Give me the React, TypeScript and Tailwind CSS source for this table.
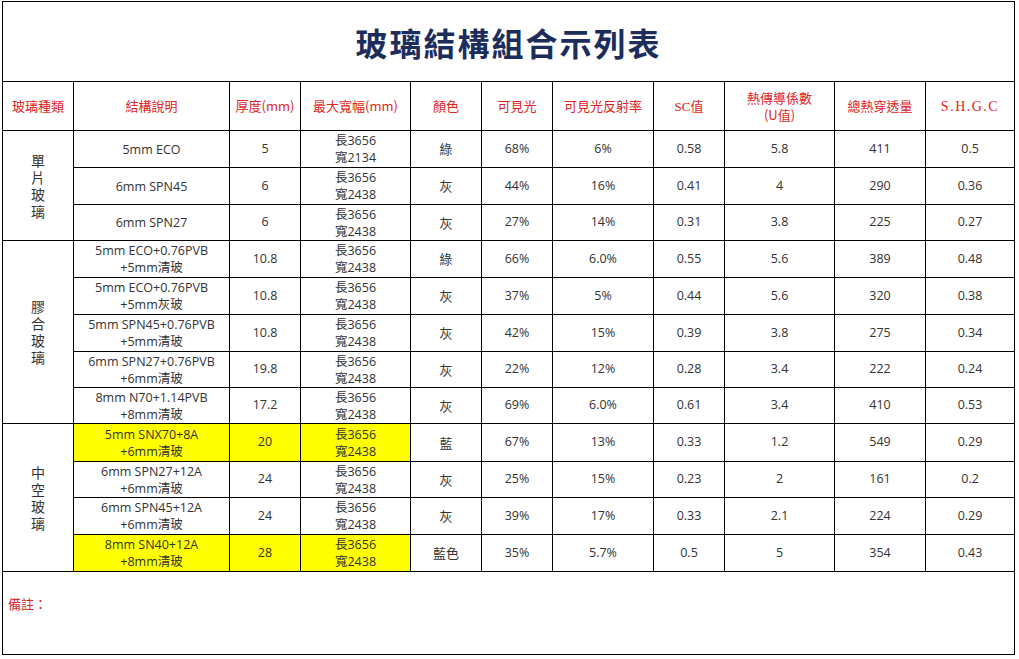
import React from "react";

const rows = [
  { g: "單片玻璃", span: 3, desc: ["5mm ECO"], t: "5", w: "2134", c: "綠", v: "68%", r: "6%", sc: "0.58", u: "5.8", tot: "411", shgc: "0.5", h: "h-[37px]" },
  { desc: ["6mm SPN45"], t: "6", w: "2438", c: "灰", v: "44%", r: "16%", sc: "0.41", u: "4", tot: "290", shgc: "0.36", h: "h-[37px]" },
  { desc: ["6mm SPN27"], t: "6", w: "2438", c: "灰", v: "27%", r: "14%", sc: "0.31", u: "3.8", tot: "225", shgc: "0.27", h: "h-[36px]" },
  { g: "膠合玻璃", span: 5, desc: ["5mm ECO+0.76PVB", "+5mm清玻"], t: "10.8", w: "2438", c: "綠", v: "66%", r: "6.0%", sc: "0.55", u: "5.6", tot: "389", shgc: "0.48", h: "h-[37px]" },
  { desc: ["5mm ECO+0.76PVB", "+5mm灰玻"], t: "10.8", w: "2438", c: "灰", v: "37%", r: "5%", sc: "0.44", u: "5.6", tot: "320", shgc: "0.38", h: "h-[37px]" },
  { desc: ["5mm SPN45+0.76PVB", "+5mm清玻"], t: "10.8", w: "2438", c: "灰", v: "42%", r: "15%", sc: "0.39", u: "3.8", tot: "275", shgc: "0.34", h: "h-[37px]" },
  { desc: ["6mm SPN27+0.76PVB", "+6mm清玻"], t: "19.8", w: "2438", c: "灰", v: "22%", r: "12%", sc: "0.28", u: "3.4", tot: "222", shgc: "0.24", h: "h-[36px]" },
  { desc: ["8mm N70+1.14PVB", "+8mm清玻"], t: "17.2", w: "2438", c: "灰", v: "69%", r: "6.0%", sc: "0.61", u: "3.4", tot: "410", shgc: "0.53", h: "h-[36px]" },
  { g: "中空玻璃", span: 4, hl: true, desc: ["5mm SNX70+8A", "+6mm清玻"], t: "20", w: "2438", c: "藍", v: "67%", r: "13%", sc: "0.33", u: "1.2", tot: "549", shgc: "0.29", h: "h-[38px]" },
  { desc: ["6mm SPN27+12A", "+6mm清玻"], t: "24", w: "2438", c: "灰", v: "25%", r: "15%", sc: "0.23", u: "2", tot: "161", shgc: "0.2", h: "h-[36px]" },
  { desc: ["6mm SPN45+12A", "+6mm清玻"], t: "24", w: "2438", c: "灰", v: "39%", r: "17%", sc: "0.33", u: "2.1", tot: "224", shgc: "0.29", h: "h-[37px]" },
  { hl: true, desc: ["8mm SN40+12A", "+8mm清玻"], t: "28", w: "2438", c: "藍色", v: "35%", r: "5.7%", sc: "0.5", u: "5", tot: "354", shgc: "0.43", h: "h-[37px]" },
];

const cell = "border border-black text-center align-middle p-0";
const hd = "border border-black text-center align-middle p-0 text-[13px] text-[#e02424] font-['Noto_Sans_CJK_TC',sans-serif]";

export default function App() {
  return (
    <div className="min-h-screen bg-white pl-[2px] pt-[1px] font-['Open_Sans','Noto_Sans_CJK_TC',sans-serif] text-[12.5px] text-[#333]">
      <table className="table-fixed border-collapse w-[1013px]">
        <colgroup>
          <col className="w-[71px]" />
          <col className="w-[156px]" />
          <col className="w-[71px]" />
          <col className="w-[110px]" />
          <col className="w-[71px]" />
          <col className="w-[71px]" />
          <col className="w-[101px]" />
          <col className="w-[71px]" />
          <col className="w-[110px]" />
          <col className="w-[91px]" />
          <col className="w-[89px]" />
        </colgroup>
        <tbody>
          {/* title */}
          <tr className="h-[80px]">
            <td colSpan={11} className={cell}>
              <span className="text-[32px] font-bold tracking-[2px] text-[#1c2d5c] font-['Noto_Sans_CJK_TC',sans-serif]">
                玻璃結構組合示列表
              </span>
            </td>
          </tr>

          {/* header */}
          <tr className="h-[49px]">
            <td className={hd}>玻璃種類</td>
            <td className={hd}>結構說明</td>
            <td className={hd}>厚度(mm)</td>
            <td className={hd}>最大寬幅(mm)</td>
            <td className={hd}>顏色</td>
            <td className={hd}>可見光</td>
            <td className={hd}>可見光反射率</td>
            <td className={hd}>
              <span className="font-['Liberation_Serif','Noto_Sans_CJK_TC',serif]">SC</span>值
            </td>
            <td className={hd}>
              <div className="leading-[17px]">熱傳導係數</div>
              <div className="leading-[17px]">(U值)</div>
            </td>
            <td className={hd}>總熱穿透量</td>
            <td className={hd}>
              <span className="font-['Liberation_Serif',serif] text-[14px] tracking-[1.5px]">S.H.G.C</span>
            </td>
          </tr>

          {rows.map((r, i) => (
            <tr key={i} className={r.h}>
              {r.g && (
                <td rowSpan={r.span} className={cell}>
                  <div className="flex flex-col items-center text-[14px] leading-[17px] font-['Noto_Sans_CJK_TC',sans-serif]">
                    {r.g.split("").map((ch, k) => (
                      <span key={k} className="leading-[17px]">{ch}</span>
                    ))}
                  </div>
                </td>
              )}
              <td className={`${cell} ${r.hl ? "bg-[#ffff00]" : ""} leading-[17px]`}>
                {r.desc.map((d, k) => (
                  <div key={k}>{d}</div>
                ))}
              </td>
              <td className={`${cell} ${r.hl ? "bg-[#ffff00]" : ""}`}>{r.t}</td>
              <td className={`${cell} ${r.hl ? "bg-[#ffff00]" : ""} leading-[17px]`}>
                <div>長3656</div>
                <div>寬{r.w}</div>
              </td>
              <td className={`${cell} text-[13px] font-['Noto_Sans_CJK_TC',sans-serif]`}>{r.c}</td>
              <td className={cell}>{r.v}</td>
              <td className={cell}>{r.r}</td>
              <td className={cell}>{r.sc}</td>
              <td className={cell}>{r.u}</td>
              <td className={cell}>{r.tot}</td>
              <td className={cell}>{r.shgc}</td>
            </tr>
          ))}

          {/* notes */}
          <tr className="h-[83px]">
            <td colSpan={11} className="border border-black align-top text-left p-0 pl-[5px] pt-[22px]">
              <span className="text-[13px] text-[#d42a2a] font-['Noto_Sans_CJK_TC',sans-serif]">備註：</span>
            </td>
          </tr>
        </tbody>
      </table>
    </div>
  );
}
